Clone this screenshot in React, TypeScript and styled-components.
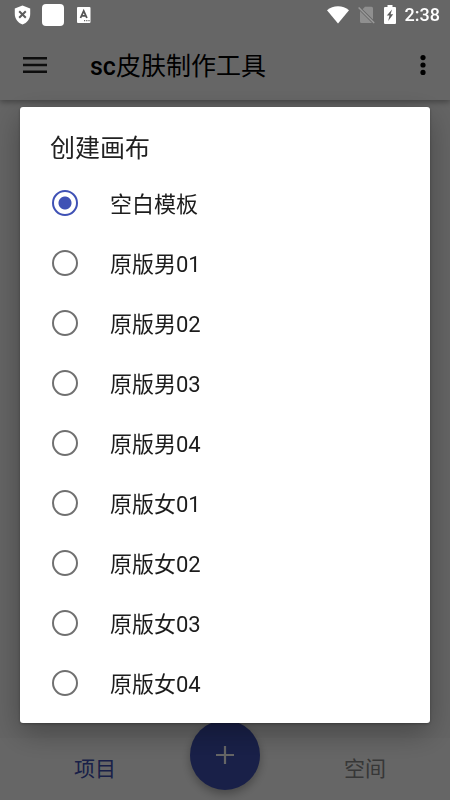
import React, { useState } from "react";
import styled, { createGlobalStyle } from "styled-components";

const GlobalStyle = createGlobalStyle`
  *, *::before, *::after { box-sizing: border-box; }
  body {
    margin: 0;
    background: #fafafa;
    font-family: Roboto, "Noto Sans CJK SC", sans-serif;
    color: #000;
  }
  button, input { font: inherit; margin: 0; }
  button { border: 0; padding: 0; background: none; color: inherit; cursor: pointer; }
`;

const Page = styled.div`
  min-height: 100vh;
  display: flex;
  flex-direction: column;
  background: #fafafa;
`;

const StatusBar = styled.div`
  position: fixed;
  inset: 0 0 auto 0;
  z-index: 3;
  height: 30px;
  padding: 0 10px 0 12px;
  display: flex;
  align-items: center;
  justify-content: space-between;
  color: #fff;
`;

const StatusIcons = styled.div`
  display: flex;
  align-items: center;
  gap: 9px;
  svg { display: block; }
`;

const Notifications = styled(StatusIcons)`
  svg:last-child { margin-left: 4px; }
`;

const Clock = styled.time`
  font-size: 18px;
  line-height: 30px;
  font-weight: 500;
`;

const AppBar = styled.header`
  padding: 30px 15px 0 20px;
  display: flex;
  align-items: center;
  background: #fff;
  box-shadow: 0 2px 6px rgba(0, 0, 0, 0.35);
  z-index: 1;
`;

const IconButton = styled.button<{ $width: number }>`
  width: ${(p) => p.$width}px;
  height: 70px;
  display: flex;
  align-items: center;
  justify-content: center;
`;

const AppTitle = styled.h1`
  flex: 1;
  margin: 0 0 0 40px;
  padding-top: 4px;
  font-size: 25px;
  line-height: 36px;
  font-weight: 400;
  b { font-weight: 500; }
`;

const Content = styled.main`
  flex: 1;
`;

const BottomBar = styled.nav`
  height: 62px;
  display: grid;
  grid-template-columns: 1fr 70px 1fr;
  align-items: center;
  background: #fff;
`;

const Tab = styled.button<{ $active?: boolean; $inset?: number }>`
  height: 62px;
  padding-left: ${(p) => p.$inset ?? 0}px;
  font-size: 21px;
  line-height: 30px;
  color: ${(p) => (p.$active ? "#3f51b5" : "#8a8a8a")};
`;

const AddButton = styled.button`
  width: 70px;
  height: 70px;
  margin-top: -28px;
  border-radius: 50%;
  display: flex;
  align-items: center;
  justify-content: center;
  background: #3f51b5;
  color: #fff;
  box-shadow: 0 4px 10px rgba(0, 0, 0, 0.3);
`;

const Scrim = styled.div`
  position: fixed;
  inset: 0;
  z-index: 2;
  padding: 30px 20px 0;
  display: flex;
  align-items: center;
  background: rgba(0, 0, 0, 0.6);
`;

const Dialog = styled.form`
  width: 100%;
  padding: 24px 0 10px;
  border-radius: 3px;
  background: #fff;
  box-shadow: 0 10px 30px rgba(0, 0, 0, 0.3), 0 1px 3px rgba(0, 0, 0, 0.3);
`;

const DialogTitle = styled.h2`
  margin: 0 30px 6px;
  font-size: 25px;
  line-height: 36px;
  font-weight: 400;
  color: #212121;
`;

const Options = styled.div`
  display: flex;
  flex-direction: column;
`;

const Option = styled.label`
  height: 60px;
  padding: 0 32px;
  display: flex;
  align-items: center;
  gap: 32px;
  color: #1c1c1c;
  cursor: pointer;
`;

const OptionText = styled.span`
  padding-top: 4px;
  font-size: 22px;
  line-height: 30px;
`;

const Radio = styled.input`
  appearance: none;
  width: 26px;
  height: 26px;
  border: 2px solid #707070;
  border-radius: 50%;
  background: #fff;
  &:checked {
    border-color: #3f51b5;
    background: radial-gradient(circle, #3f51b5 6px, #fff 7px);
  }
`;

const templates = [
  "空白模板",
  "原版男01",
  "原版男02",
  "原版男03",
  "原版男04",
  "原版女01",
  "原版女02",
  "原版女03",
  "原版女04",
];

const ShieldIcon = () => (
  <svg width="21" height="20" viewBox="0 0 21 20" aria-hidden="true">
    <path d="M10.5 .5 18.2 3.500V9c0 5-3.300 9-7.700 10.500C6.100 18 2.800 14 2.800 9V3.500Z" fill="#fff" />
    <path d="m7.200 6.200 6.600 6.600m0-6.600-6.600 6.600" stroke="#5c5c5c" strokeWidth="2" />
  </svg>
);

const SquareIcon = () => (
  <svg width="22" height="22" viewBox="0 0 22 22" aria-hidden="true">
    <rect width="22" height="22" rx="4" fill="#fff" />
  </svg>
);

const LetterIcon = () => (
  <svg width="14" height="16" viewBox="0 0 14 16" aria-hidden="true">
    <rect width="13.500" height="16" rx="1" fill="#fff" />
    <path d="m3.500 11 3.200-7 3.200 7M4.700 8.800h4" fill="none" stroke="#555" strokeWidth="1.800" />
    <path d="M7 13.700h1.200m1 0h1.200m1 0h1.200" stroke="#666" strokeWidth="1.200" />
  </svg>
);

const WifiIcon = () => (
  <svg width="22" height="18" viewBox="0 0 22 18" aria-hidden="true">
    <path d="M0 4.300C6-1 16-1 22 4.300L11 17.500Z" fill="#fff" />
  </svg>
);

const NoSimIcon = () => (
  <svg width="17" height="18" viewBox="0 0 17 18" aria-hidden="true">
    <path d="M7 .8h6.500q1.500 0 1.500 1.500V13.500L4.600 3.200ZM2 5l12 12H3.500Q2 17 2 15.500Z" fill="#8f8f8f" />
    <path d="m.6 1.400 15.600 15.600" stroke="#9a9a9a" strokeWidth="1.400" />
  </svg>
);

const BatteryIcon = () => (
  <svg width="12" height="20" viewBox="0 0 12 20" aria-hidden="true">
    <path d="M3.500 0h5v2H11q1 0 1 1v15q0 1-1 1H1q-1 0-1-1V3q0-1 1-1h2.500Z" fill="#fff" />
    <path d="M8 4.500 2.800 10.500h2.700L4.200 16l5-6.800H6.600Z" fill="#5c5c5c" />
  </svg>
);

const MenuIcon = () => (
  <svg width="24" height="16" viewBox="0 0 24 16" aria-hidden="true">
    <path d="M0 1.200h24M0 8h24M0 14.800h24" stroke="#222" strokeWidth="2.400" />
  </svg>
);

const MoreIcon = () => (
  <svg width="6" height="20" viewBox="0 0 6 20" aria-hidden="true">
    <circle cx="3" cy="2.600" r="2.600" />
    <circle cx="3" cy="10" r="2.600" />
    <circle cx="3" cy="17.400" r="2.600" />
  </svg>
);

const PlusIcon = () => (
  <svg width="18" height="18" viewBox="0 0 18 18" aria-hidden="true">
    <path d="M9 0v18M0 9h18" stroke="currentColor" strokeWidth="2.200" />
  </svg>
);

export default function App() {
  const [selected, setSelected] = useState(templates[0]);

  return (
    <>
      <GlobalStyle />
      <StatusBar>
        <Notifications>
          <ShieldIcon />
          <SquareIcon />
          <LetterIcon />
        </Notifications>
        <StatusIcons>
          <WifiIcon />
          <NoSimIcon />
          <BatteryIcon />
          <Clock>2:38</Clock>
        </StatusIcons>
      </StatusBar>
      <Page>
        <AppBar>
          <IconButton $width={30} type="button" aria-label="菜单">
            <MenuIcon />
          </IconButton>
          <AppTitle>
            <b>sc</b>皮肤制作工具
          </AppTitle>
          <IconButton $width={25} type="button" aria-label="更多">
            <MoreIcon />
          </IconButton>
        </AppBar>
        <Content />
        <BottomBar>
          <Tab $active type="button">项目</Tab>
          <AddButton type="button" aria-label="新建">
            <PlusIcon />
          </AddButton>
          <Tab $inset={20} type="button">空间</Tab>
        </BottomBar>
      </Page>
      <Scrim>
        <Dialog role="dialog" aria-modal="true" aria-labelledby="dialog-title">
          <DialogTitle id="dialog-title">创建画布</DialogTitle>
          <Options role="radiogroup" aria-labelledby="dialog-title">
            {templates.map((name) => (
              <Option key={name}>
                <Radio
                  type="radio"
                  name="template"
                  value={name}
                  checked={selected === name}
                  onChange={() => setSelected(name)}
                />
                <OptionText>{name}</OptionText>
              </Option>
            ))}
          </Options>
        </Dialog>
      </Scrim>
    </>
  );
}
